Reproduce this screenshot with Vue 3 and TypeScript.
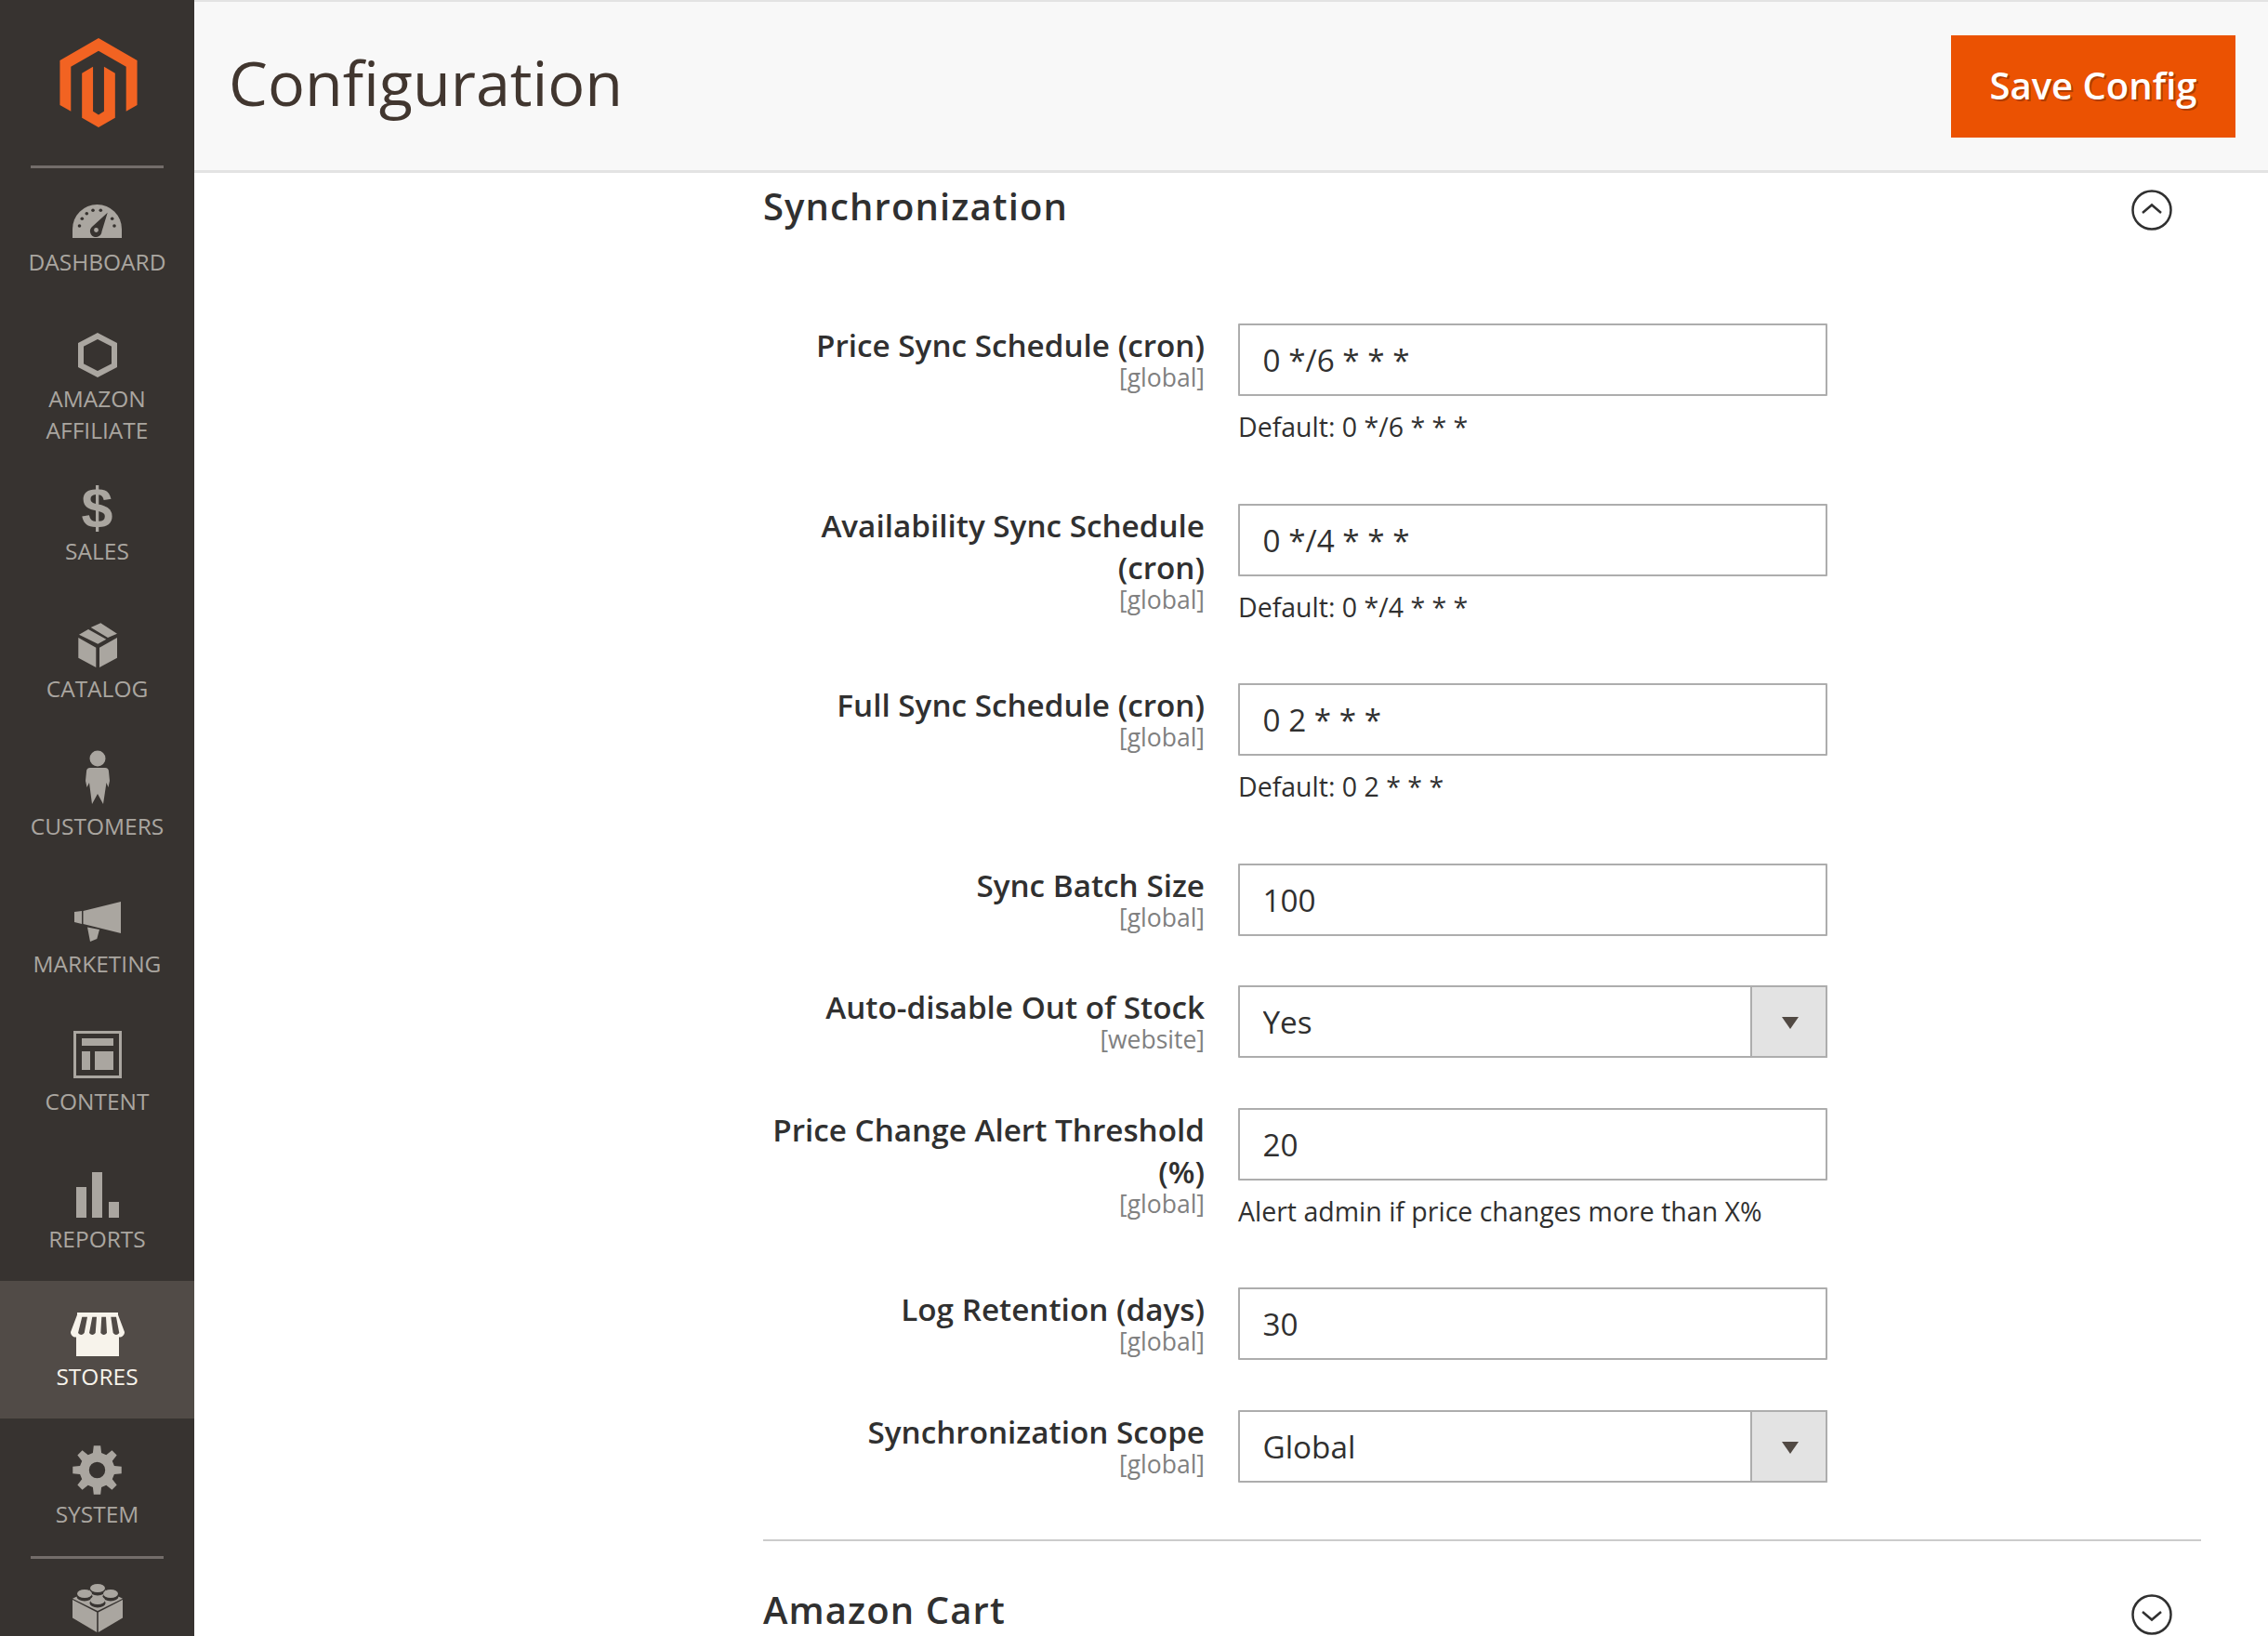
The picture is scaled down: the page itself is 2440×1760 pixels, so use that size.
<template>
  <div class="page">
    <aside class="sidebar">
      <div class="logo">
        <svg width="96" height="96" viewBox="0 0 24 24">
          <path fill="#f26322" d="M12 24l-4.455-2.572v-12l2.97-1.715v12.001l1.485.902 1.485-.902V7.713l2.971 1.715v12L12 24zM22.391 6v12l-2.969 1.714V7.713L12 3.43 4.574 7.713v12.001L1.609 18V6L12 0l10.391 6z" />
        </svg>
      </div>
      <div class="nav-divider"></div>
      <nav class="nav">
        <template v-for="item in menu" :key="item.id">
          <div v-if="item.id === 'extensions'" class="nav-divider"></div>
          <a
            class="nav-item"
            :class="['nav-' + item.id, { active: item.id === 'stores' }]"
          >
            <span class="nav-icon">
              <svg v-if="item.id === 'dashboard'" width="53" height="36" viewBox="0 0 53 36">
                <path class="fg" d="M0 36V26.500A26.500 26.500 0 0 1 53 26.500V36Z" />
                <g class="bgf">
                  <circle cx="7.500" cy="23" r="1.800" />
                  <circle cx="10.300" cy="15.300" r="1.800" />
                  <circle cx="15.300" cy="9.700" r="1.800" />
                  <circle cx="22" cy="6.300" r="1.800" />
                  <circle cx="30.300" cy="6.300" r="1.800" />
                  <circle cx="42.700" cy="15.300" r="1.800" />
                  <circle cx="45" cy="23" r="1.800" />
                </g>
                <path class="bgf" d="M37.700 8.700L31.500 29A6.300 6.300 0 1 1 21 24Z" />
                <circle class="fg" cx="25.500" cy="27.500" r="2.400" />
              </svg>
              <svg v-else-if="item.id === 'amazon'" width="42" height="48" viewBox="0 0 42 48">
                <path class="line" d="M21 3.500L39 12.800V35.200L21 44.500L3 35.200V12.800Z" />
              </svg>
              <span v-else-if="item.id === 'sales'" class="dollar">$</span>
              <svg v-else-if="item.id === 'catalog'" width="42" height="49" viewBox="0 0 42 49">
                <path class="fg" d="M0.300 16L19.300 26.700V48L0.300 37.700ZM42 16L23 26.700V48L42 37.700Z" />
                <path class="fg" d="M13.700 5L24.300 0.300L42 11.700L32 16ZM1 12.700L11 7L30.300 17.700L21.300 22.700Z" />
              </svg>
              <svg v-else-if="item.id === 'customers'" width="26" height="58" viewBox="0 0 26 58">
                <circle class="fg" cx="13" cy="9" r="8.500" />
                <path class="fg" d="M5 19H21C23.500 19 25 20.500 25 23L26 33L24.500 40L22.500 35L19 58L13 47L7 58L4 35L1.500 40L0 33L1 23C1 20.500 2.500 19 5 19Z" />
              </svg>
              <svg v-else-if="item.id === 'marketing'" width="50" height="43" viewBox="0 0 50 43">
                <path class="fg" d="M0 11L8 10V24L0 22ZM9.500 10L50 0V34L9.500 24ZM14 27.500L27 30L24.300 40L17 43Z" />
              </svg>
              <svg v-else-if="item.id === 'content'" width="52" height="51" viewBox="0 0 52 51">
                <path class="fg" fill-rule="evenodd" d="M0 0H52V51H0ZM3 3V48H49V3ZM9 8H43V16H9ZM9 22H18V42H9ZM23 22H43V42H23Z" />
              </svg>
              <svg v-else-if="item.id === 'reports'" width="46" height="49" viewBox="0 0 46 49">
                <path class="fg" d="M0 16H11V49H0ZM17 0H28V49H17ZM35 32H46V49H35Z" />
              </svg>
              <svg v-else-if="item.id === 'stores'" width="58" height="47" viewBox="0 0 58 47">
                <path class="fg" d="M6 22H52V47H6Z" />
                <path class="fg" d="M7 0H51V2.500L58 21C58 26 52.500 28 49.500 25.500C47 28 42.500 28 39.500 25.500C37 28 32 28 29 25.500C26 28 21.500 28 19 25.500C16 28 11 28 8.500 25.500C5.500 28 0 26 0 21L7 2.500Z" />
                <path class="bgf" d="M12.300 4.700H18L14.700 22Q11.300 26 8 22ZM23.300 4.700H28L26.700 22Q23.300 26 20 22ZM33.300 4.700H38L39 22Q35.700 26 32.300 22ZM43.300 4.700H49L52.300 22Q49 26 45.700 22Z" />
              </svg>
              <svg v-else-if="item.id === 'system'" width="53" height="53" viewBox="0 0 53 53">
                <path class="fg" fill-rule="evenodd" :d="gearPath" />
              </svg>
              <svg v-else-if="item.id === 'extensions'" width="54" height="53" viewBox="0 0 54 53">
                <path class="fg" d="M0 17L26.200 30.500V52L0 36.500ZM54 17L27.800 30.500V52L54 36.500Z" />
                <path class="fg" d="M27 2.500L54 15.700L27 29L0 15.700Z" />
                <g v-for="stud in studs" :key="stud[0] + '-' + stud[1]">
                  <ellipse class="bgf" :cx="stud[0]" :cy="stud[1] + 1.500" rx="8.500" ry="5" />
                  <ellipse class="fg" :cx="stud[0]" :cy="stud[1] - 1.500" rx="8" ry="4.500" />
                </g>
              </svg>
            </span>
            <span v-if="item.label" class="nav-label">{{ item.label }}</span>
          </a>
        </template>
      </nav>
    </aside>

    <main class="main">
      <header class="page-header">
        <h1>Configuration</h1>
        <button class="save-btn" type="button">Save Config</button>
      </header>

      <div class="content">
        <section class="section open">
          <div class="section-head">
            <h2>Synchronization</h2>
            <svg class="toggle" width="44" height="44" viewBox="0 0 44 44">
              <circle cx="22" cy="22" r="20.500" />
              <path d="M12 25L22 16.500L32 25" />
            </svg>
          </div>

          <div v-for="row in rows" :key="row.label" class="row">
            <div class="label">
              <label>{{ row.label }}</label>
              <span class="scope">[{{ row.scope }}]</span>
            </div>
            <div class="value">
              <div v-if="row.options" class="select-wrap">
                <select class="control" :value="row.value">
                  <option v-for="opt in row.options" :key="opt">{{ opt }}</option>
                </select>
              </div>
              <input v-else class="control" type="text" :value="row.value" />
              <p v-if="row.note" class="note">{{ row.note }}</p>
            </div>
          </div>
        </section>

        <section class="section">
          <div class="section-head">
            <h2>Amazon Cart</h2>
            <svg class="toggle" width="44" height="44" viewBox="0 0 44 44">
              <circle cx="22" cy="22" r="20.500" />
              <path d="M12 19L22 27.500L32 19" />
            </svg>
          </div>
        </section>
      </div>
    </main>
  </div>
</template>

<script setup lang="ts">
interface MenuItem {
  id: string
  label: string
}

interface ConfigRow {
  label: string
  scope: string
  value: string
  note?: string
  options?: string[]
}

const menu: MenuItem[] = [
  { id: 'dashboard', label: 'DASHBOARD' },
  { id: 'amazon', label: 'AMAZON AFFILIATE' },
  { id: 'sales', label: 'SALES' },
  { id: 'catalog', label: 'CATALOG' },
  { id: 'customers', label: 'CUSTOMERS' },
  { id: 'marketing', label: 'MARKETING' },
  { id: 'content', label: 'CONTENT' },
  { id: 'reports', label: 'REPORTS' },
  { id: 'stores', label: 'STORES' },
  { id: 'system', label: 'SYSTEM' },
  { id: 'extensions', label: '' }
]

const rows: ConfigRow[] = [
  { label: 'Price Sync Schedule (cron)', scope: 'global', value: '0 */6 * * *', note: 'Default: 0 */6 * * *' },
  { label: 'Availability Sync Schedule (cron)', scope: 'global', value: '0 */4 * * *', note: 'Default: 0 */4 * * *' },
  { label: 'Full Sync Schedule (cron)', scope: 'global', value: '0 2 * * *', note: 'Default: 0 2 * * *' },
  { label: 'Sync Batch Size', scope: 'global', value: '100' },
  { label: 'Auto-disable Out of Stock', scope: 'website', value: 'Yes', options: ['Yes', 'No'] },
  { label: 'Price Change Alert Threshold (%)', scope: 'global', value: '20', note: 'Alert admin if price changes more than X%' },
  { label: 'Log Retention (days)', scope: 'global', value: '30' },
  { label: 'Synchronization Scope', scope: 'global', value: 'Global', options: ['Global', 'Website'] }
]

// back to front, so the front stud covers the shading of the others
const studs: [number, number][] = [
  [27, 6],
  [13, 12],
  [41, 12],
  [27, 19]
]

// 8 teeth, first one pointing up
const makeGear = (): string => {
  const cx = 26.5
  const cy = 26.5
  const pt = (r: number, deg: number) => {
    const a = ((deg - 90) * Math.PI) / 180
    return `${(cx + r * Math.cos(a)).toFixed(2)} ${(cy + r * Math.sin(a)).toFixed(2)}`
  }
  let d = ''
  for (let i = 0; i < 8; i++) {
    const c = i * 45
    d += `${i ? 'L' : 'M'}${pt(19, c - 14)}L${pt(26.5, c - 8)}L${pt(26.5, c + 8)}L${pt(19, c + 14)}`
  }
  d += 'Z'
  d += 'M35.2 26.5A8.700 8.700 0 1 0 17.800 26.500A8.700 8.700 0 1 0 35.200 26.500Z'
  return d
}

const gearPath = makeGear()
</script>

<style>
html,
body {
  margin: 0;
  height: 1760px;
  overflow: hidden;
  background: #ffffff;
}
</style>

<style scoped>
.page {
  display: flex;
  width: 2440px;
  height: 1760px;
  overflow: hidden;
  font-family: "Open Sans", "Noto Sans", sans-serif;
  color: #303030;
}

/* Sidebar */
.sidebar {
  flex: 0 0 209px;
  height: 1760px;
  overflow: hidden;
  background: #373330;
}

.logo {
  display: flex;
  justify-content: center;
  height: 178px;
  box-sizing: border-box;
  padding: 41px 0 0 2px;
}

.nav-divider {
  height: 3px;
  margin: 0 33px;
  background: #736d6a;
}

.nav {
  display: flex;
  flex-direction: column;
}

.nav-item {
  display: flex;
  flex-direction: column;
  align-items: center;
  flex: none;
  box-sizing: border-box;
  height: 148px;
  padding-top: 26px;
  color: #aaa6a0;
  text-align: center;
}

.nav-dashboard {
  height: 145px;
  padding-top: 30px;
}

.nav-dashboard .nav-icon {
  height: 54px;
}

.nav-amazon {
  height: 164px;
}

.nav-customers svg {
  margin-bottom: 12px;
}

.nav-content svg {
  margin-bottom: 8px;
}

.nav-marketing svg,
.nav-stores svg {
  margin-top: 2px;
}

.nav-reports svg,
.nav-system svg {
  margin-bottom: 2px;
}

.nav-extensions {
  padding-top: 23px;
}

.nav-item.active {
  background: #514b47;
  color: #f7f3eb;
}

.nav-icon {
  display: flex;
  align-items: center;
  justify-content: center;
  height: 60px;
  flex: none;
}

.fg {
  fill: currentColor;
}

.bgf {
  fill: #373330;
}

.active .bgf {
  fill: #514b47;
}

.line {
  fill: none;
  stroke: currentColor;
  stroke-width: 6;
}

.dollar {
  font-family: "Liberation Sans", Arial, sans-serif;
  font-weight: 700;
  font-size: 61px;
  line-height: 60px;
}

.nav-label {
  display: block;
  width: 170px;
  font-size: 24.500px;
  line-height: 34px;
}

/* Main area */
.main {
  flex: 1;
  min-width: 0;
  display: flex;
  flex-direction: column;
}

.page-header {
  display: flex;
  flex: none;
  align-items: center;
  justify-content: space-between;
  box-sizing: border-box;
  height: 186px;
  padding: 0 35px 0 37px;
  background: #f8f8f8;
  border-top: 2px solid #e3e3e3;
  border-bottom: 3px solid #e3e3e3;
}

.page-header h1 {
  margin: 0 0 8px;
  font-size: 66.500px;
  font-weight: 400;
  color: #41362f;
  line-height: 1.2;
}

.save-btn {
  width: 306px;
  height: 110px;
  padding: 0 0 3px;
  border: 0;
  background: #eb5202;
  color: #ffffff;
  font-family: inherit;
  font-size: 40px;
  font-weight: 600;
  text-shadow: 2px 2px 0 rgba(0, 0, 0, 0.25);
}

.content {
  padding: 0 72px 0 612px;
}

.section.open {
  padding-bottom: 8px;
  border-bottom: 2px solid #cccccc;
}

.section-head {
  display: flex;
  align-items: flex-start;
  justify-content: space-between;
  padding-right: 31px;
}

.section-head h2 {
  margin: 0;
  font-size: 40px;
  font-weight: 600;
  letter-spacing: 1.100px;
  line-height: 72px;
  color: #303030;
}

.toggle {
  margin-top: 18px;
}

.toggle circle,
.toggle path {
  fill: none;
  stroke: #303030;
  stroke-width: 2.500;
}

.open .section-head {
  height: 162px;
}

.section:not(.open) .section-head {
  padding-top: 38px;
}

.section:not(.open) .toggle {
  margin-top: 19px;
}

/* Form rows */
.row {
  display: flex;
  padding-bottom: 53.500px;
}

.label {
  flex: 0 0 475px;
  box-sizing: border-box;
  padding-top: 1px;
  text-align: right;
}

.label label {
  display: block;
  font-size: 33.250px;
  font-weight: 600;
  line-height: 45px;
}

.scope {
  display: block;
  margin-top: -3px;
  font-size: 26.500px;
  line-height: 30px;
  color: #808080;
}

.value {
  width: 634px;
  margin-left: 36px;
}

.control {
  display: block;
  width: 100%;
  height: 78px;
  box-sizing: border-box;
  padding: 0 24.500px;
  border: 2.400px solid #adadad;
  border-radius: 1px;
  background: #ffffff;
  font-family: inherit;
  font-size: 33.250px;
  color: #303030;
  outline: none;
  appearance: none;
}

.select-wrap {
  position: relative;
}

.select-wrap::before {
  content: "";
  position: absolute;
  top: 0;
  right: 0;
  width: 83px;
  height: 78px;
  box-sizing: border-box;
  background: #e3e3e3;
  border: 2.400px solid #adadad;
  border-radius: 1px;
  pointer-events: none;
}

.select-wrap::after {
  content: "";
  position: absolute;
  top: 34px;
  right: 31px;
  border-left: 9.500px solid transparent;
  border-right: 9.500px solid transparent;
  border-top: 13px solid #514943;
  pointer-events: none;
}

.note {
  margin: 14px 0 10px;
  font-size: 28.500px;
  line-height: 38px;
  color: #303030;
}
</style>
